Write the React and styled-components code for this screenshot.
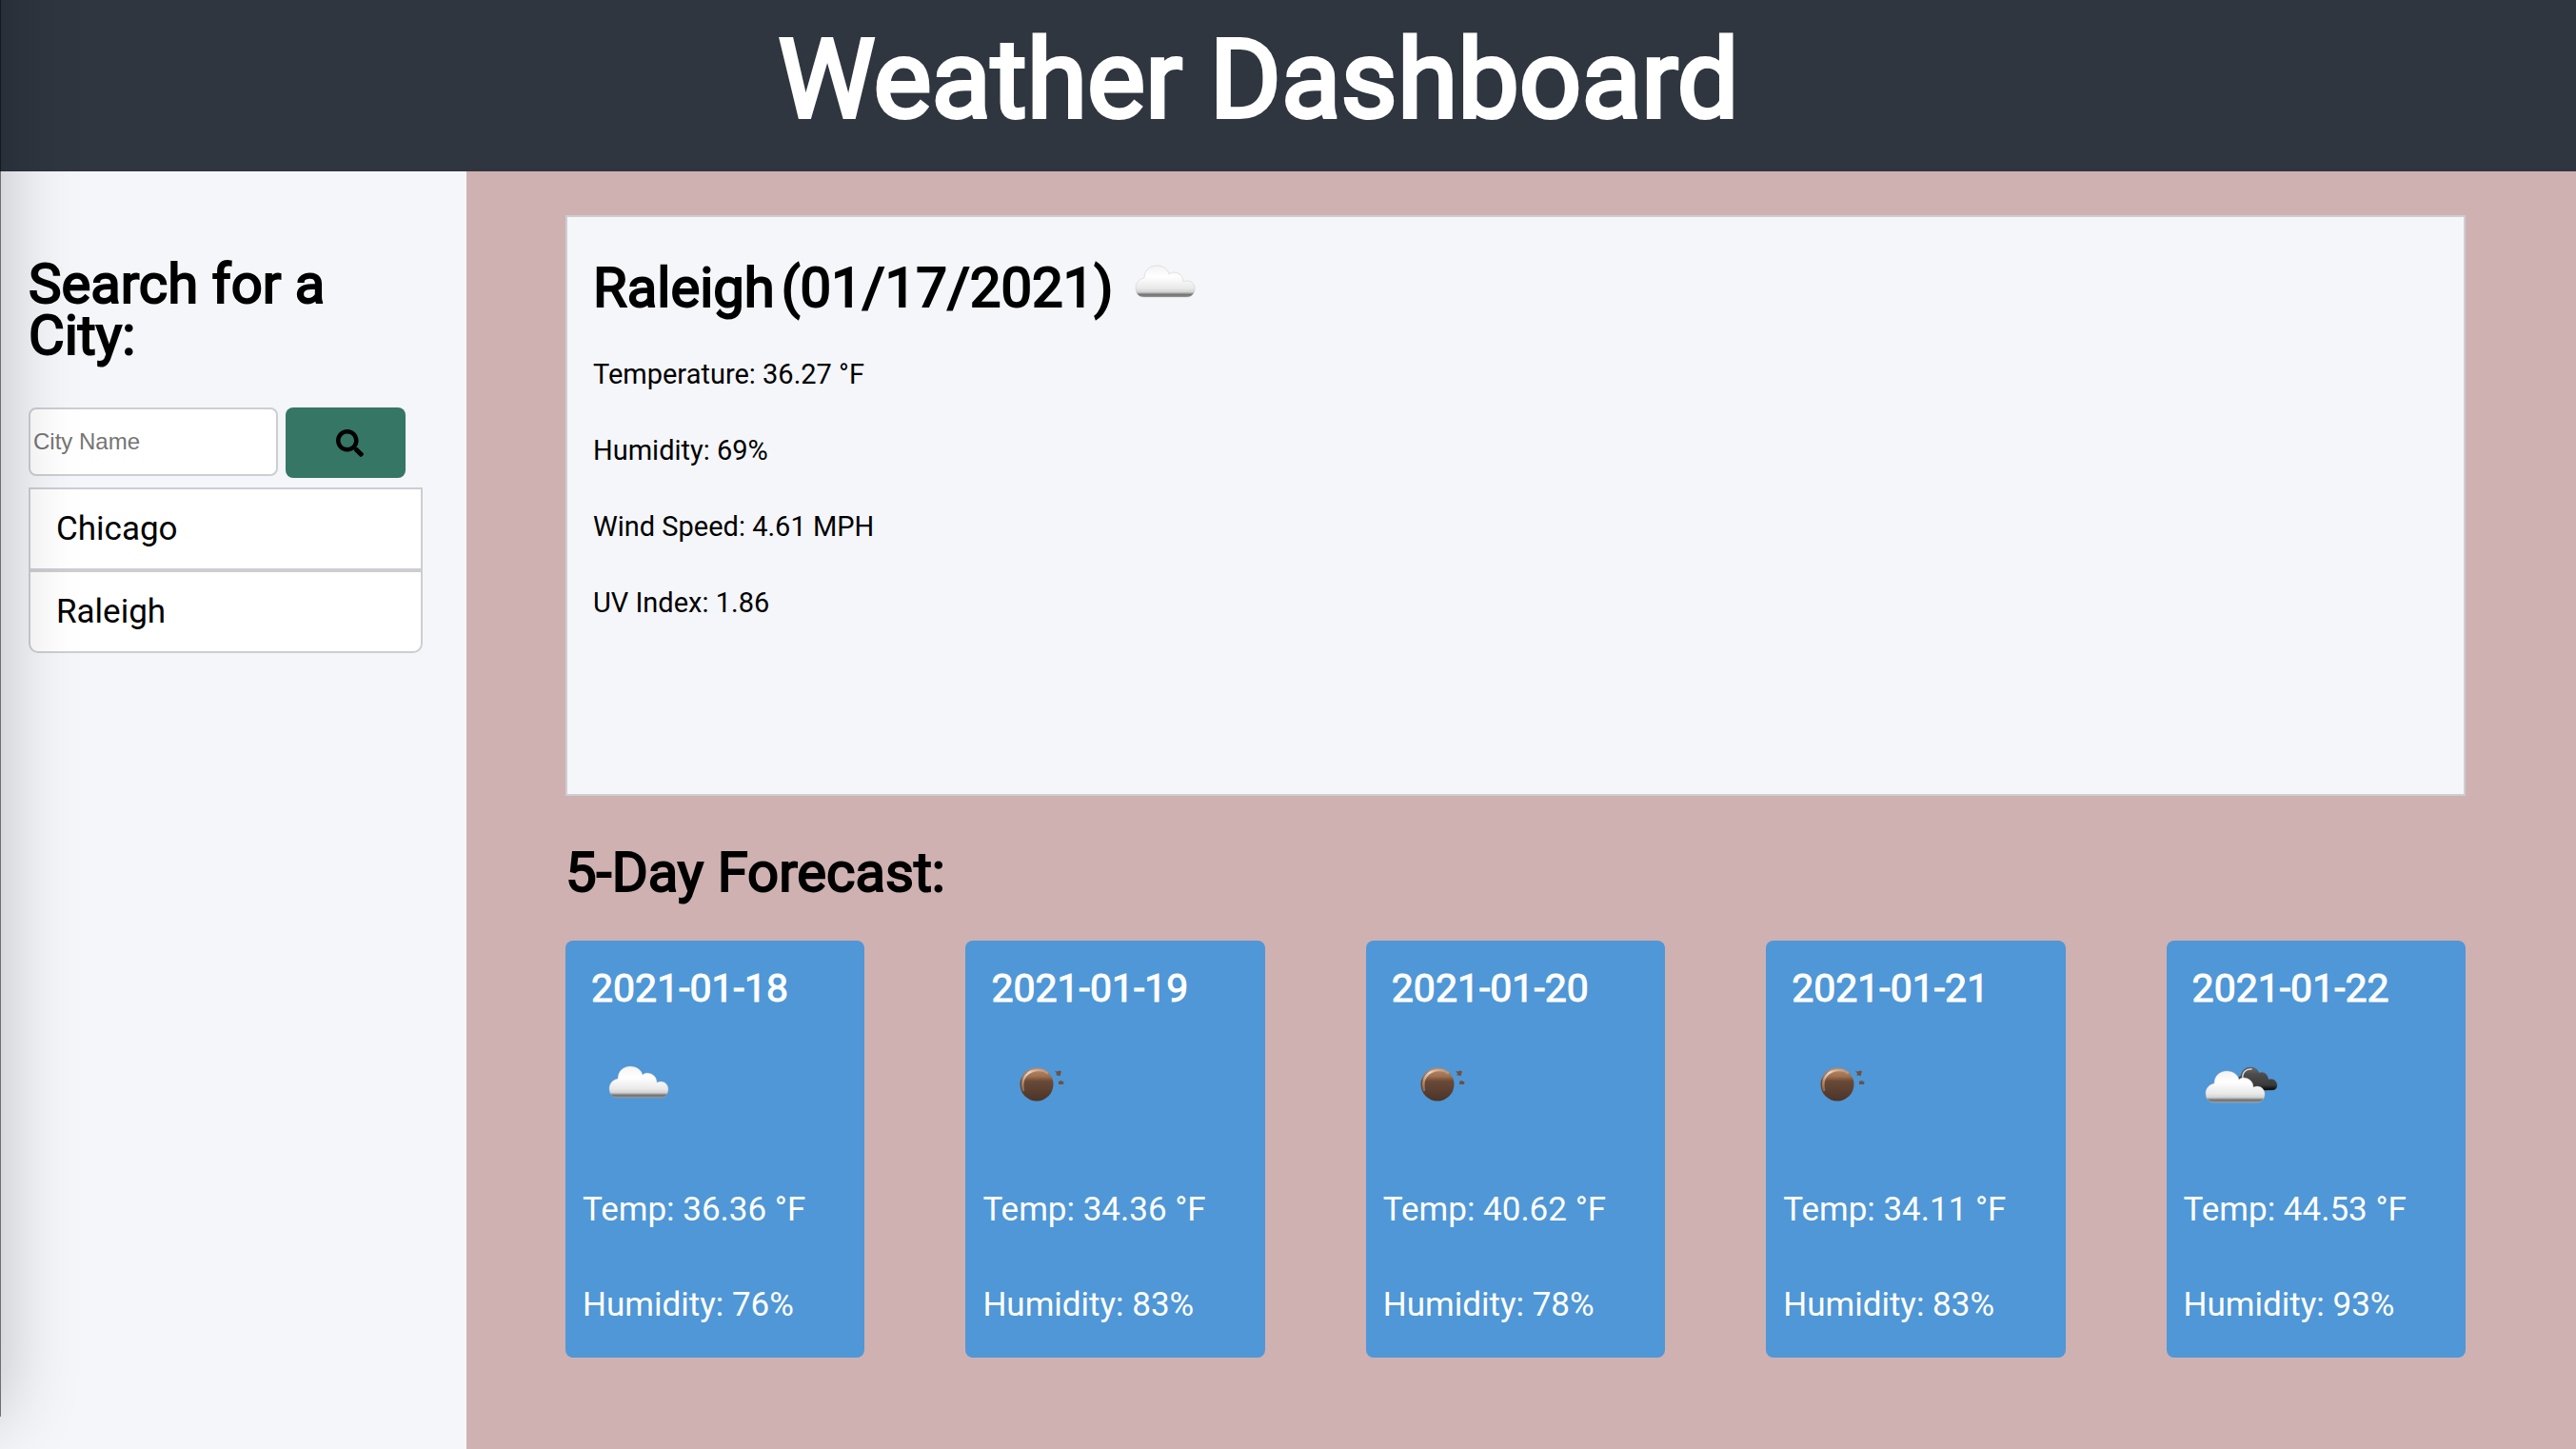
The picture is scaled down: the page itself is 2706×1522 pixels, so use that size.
import React, { useState } from "react";
import styled, { createGlobalStyle } from "styled-components";
import { FaSearch } from "react-icons/fa";

const GlobalStyle = createGlobalStyle`
  *, *::before, *::after { box-sizing: border-box; }
  body {
    margin: 0;
    background: #cfb1b2;
    color: #000;
    font-family: Roboto, "Liberation Sans", sans-serif;
    font-size: 29px;
    line-height: 34px;
  }
`;

const Page = styled.div`
  position: relative;
  display: flex;
  flex-direction: column;
  min-height: 100vh;
  overflow: hidden;
`;

const Header = styled.header`
  padding: 30px 62px 42px 0;
  background: #2f3640;
  color: #fff;
  text-align: center;
`;

const Title = styled.h1`
  margin: 0;
  font-size: 115px;
  font-weight: 400;
  line-height: 108px;
  -webkit-text-stroke: 4px currentColor;
`;

const Heading = styled.h2`
  display: block;
  margin: 0;
  font-size: 58px;
  font-weight: 400;
  line-height: 54px;
  -webkit-text-stroke: 2px currentColor;
`;

const Body = styled.div`
  display: grid;
  grid-template-columns: 490px 1fr;
  flex: 1;
`;

const Sidebar = styled.aside`
  padding: 91px 46px 46px 30px;
  background: #f5f6fa;
`;

const SearchForm = styled.form`
  display: flex;
  align-items: flex-start;
  gap: 8px;
  margin: 49px 0 10px;
`;

const CityInput = styled.input`
  width: 262px;
  height: 72px;
  padding: 0 3px;
  border: 2px solid #cdced2;
  border-radius: 8px;
  background: #fff;
  font-family: "Liberation Sans", Arial, sans-serif;
  font-size: 24px;

  &::placeholder {
    color: #757575;
    opacity: 1;
  }
`;

const SearchButton = styled.button`
  display: flex;
  align-items: center;
  justify-content: center;
  width: 126px;
  height: 74px;
  padding: 0 0 0 8px;
  border: 0;
  border-radius: 8px;
  background: #357665;
  color: #000;
  font-size: 29px;
`;

const CityList = styled.ul`
  margin: 0;
  padding: 0;
  list-style: none;
`;

const CityItem = styled.li`
  border: 2px solid #cdced2;
  background: #fff;
  overflow: hidden;

  &:last-child {
    border-radius: 0 0 10px 10px;
  }
`;

const CityButton = styled.button`
  display: block;
  width: 100%;
  padding: 22px 27px 21px;
  border: 0;
  background: none;
  color: inherit;
  font-family: inherit;
  font-size: 35px;
  line-height: 40px;
  text-align: left;
`;

const Main = styled.main`
  padding: 46px 116px 96px 104px;
`;

const Current = styled.section`
  min-height: 610px;
  padding: 47px 27px;
  border: 2px solid #cdced2;
  background: #f5f6fa;
`;

const CurrentTop = styled.div`
  display: flex;
  align-items: flex-end;
  gap: 7px;
  height: 54px;
  margin-bottom: 47px;
`;

const Readings = styled.div`
  display: flex;
  flex-direction: column;
  gap: 46px;
`;

const Reading = styled.p`
  margin: 0;
`;

const Forecast = styled.section`
  padding-top: 53px;
`;

const Cards = styled.div`
  display: grid;
  grid-template-columns: repeat(5, 1fr);
  gap: 106px;
  margin-top: 45px;
`;

const Card = styled.article`
  padding: 28px 18px 35px;
  border-radius: 8px;
  background: #4f97d6;
  color: #fff;
  font-size: 35px;
  line-height: 40px;
`;

const CardDate = styled.h3`
  margin: 0 9px 28px;
  font-size: 41px;
  font-weight: 400;
  line-height: 44px;
  -webkit-text-stroke: 1px currentColor;
`;

const CardIcon = styled.div`
  height: 100px;
  margin: 0 9px 63px;
`;

const CardLine = styled.p`
  margin: 0;

  & + & {
    margin-top: 60px;
  }
`;

const WeatherSvg = styled.svg`
  display: block;
  flex: none;
  width: 100px;
  height: 100px;
`;

const CurrentIcon = styled.div`
  height: 82px;
  margin-left: -2px;
`;

/* Shadow that a neighbouring window casts over the left edge of the page. */
const EdgeShadow = styled.div`
  position: absolute;
  top: -200px;
  bottom: 34px;
  left: -399px;
  width: 400px;
  border-right: 1px solid rgba(0, 0, 0, 0.55);
  box-shadow: 0 0 76px rgba(0, 0, 0, 0.24);
  pointer-events: none;
`;

const CLOUD =
  "M28 65 C21 65 19 60 19 55 C19 50 23 46 28 45 C28 37 34 32 41 32 C48 32 53 36 54 41 C57 38 62 39 65 41 C68 43 69 46 69 49 C75 46 81 50 81 56 C81 61 78 65 73 65 Z";

function IconDefs({ id }) {
  return (
    <defs>
      <linearGradient id={`${id}-white`} x1="0" y1="0" x2="0" y2="1">
        <stop offset="0" stopColor="#f3f3f3" />
        <stop offset="0.35" stopColor="#ffffff" />
        <stop offset="0.72" stopColor="#e9e9e9" />
        <stop offset="0.84" stopColor="#d2d2d2" />
        <stop offset="0.92" stopColor="#747474" />
        <stop offset="1" stopColor="#8c8c8c" />
      </linearGradient>
      <linearGradient id={`${id}-dark`} x1="0" y1="0" x2="0" y2="1">
        <stop offset="0" stopColor="#6a6a6a" />
        <stop offset="0.3" stopColor="#4c4c4c" />
        <stop offset="0.75" stopColor="#3a3a3a" />
        <stop offset="0.95" stopColor="#080808" />
      </linearGradient>
      <linearGradient id={`${id}-moon`} x1="0" y1="0" x2="0" y2="1">
        <stop offset="0" stopColor="#b08a70" />
        <stop offset="0.25" stopColor="#a3724e" />
        <stop offset="0.4" stopColor="#6a4a38" />
        <stop offset="1" stopColor="#4a3429" />
      </linearGradient>
      <linearGradient id={`${id}-rim`} x1="0" y1="1" x2="0.9" y2="0">
        <stop offset="0" stopColor="#c98e60" stopOpacity="0.5" />
        <stop offset="0.6" stopColor="#ecd8c9" />
        <stop offset="1" stopColor="#e2c4ae" stopOpacity="0.3" />
      </linearGradient>
    </defs>
  );
}

function WeatherIcon({ id, kind, label }) {
  return (
    <WeatherSvg viewBox="0 0 100 100" role="img" aria-label={label}>
      <IconDefs id={id} />
      {kind === "clouds" && (
        <path d={CLOUD} fill={`url(#${id}-white)`} stroke="#b4b4b4" strokeOpacity="0.35" />
      )}
      {kind === "broken" && (
        <>
          <path
            d="M48 58 C45 50 45 45 51 42 C52 36 56 33 61 33 C66 33 69 36 70 39 C75 37 79 40 80 46 C85 44 89 48 89 52 C89 55 87 57 84 57 Z"
            fill={`url(#${id}-dark)`}
            stroke="#4a4a4a"
            strokeOpacity="0.35"
          />
          <path
            d="M53 45 C52 39 56 34.500 62 35"
            fill="none"
            stroke="#d8d8d8"
            strokeWidth="1.500"
            strokeLinecap="round"
          />
          <g transform="translate(-5 5)">
            <path d={CLOUD} fill={`url(#${id}-white)`} stroke="#c8c8c8" strokeOpacity="0.4" />
          </g>
        </>
      )}
      {kind === "moon" && (
        <>
          <circle cx="48" cy="51" r="17.500" fill={`url(#${id}-moon)`} />
          <path
            d="M34 57 C31 45 38 36 50 36 C54 36 57 37 59 39"
            fill="none"
            stroke={`url(#${id}-rim)`}
            strokeWidth="2.500"
            strokeLinecap="round"
          />
          <path d="M67 37 L69.500 37.500 L72 36.500 L74 37.500 L73 40 L73 42 L68.500 41.500 L69 39.500 Z" fill="#6d5245" />
          <path d="M71 48 L73.500 47 L76.500 48.500 L76 51 L71 51 Z" fill="#6d5245" />
        </>
      )}
    </WeatherSvg>
  );
}

const cities = ["Chicago", "Raleigh"];

const readings = [
  "Temperature: 36.27 °F",
  "Humidity: 69%",
  "Wind Speed: 4.61 MPH",
  "UV Index: 1.86",
];

const forecast = [
  { date: "2021-01-18", kind: "clouds", label: "Cloudy", temp: "36.36", humidity: 76 },
  { date: "2021-01-19", kind: "moon", label: "Clear", temp: "34.36", humidity: 83 },
  { date: "2021-01-20", kind: "moon", label: "Clear", temp: "40.62", humidity: 78 },
  { date: "2021-01-21", kind: "moon", label: "Clear", temp: "34.11", humidity: 83 },
  { date: "2021-01-22", kind: "broken", label: "Broken clouds", temp: "44.53", humidity: 93 },
];

export default function App() {
  const [query, setQuery] = useState("");

  return (
    <Page>
      <GlobalStyle />
      <Header>
        <Title>Weather Dashboard</Title>
      </Header>
      <Body>
        <Sidebar>
          <Heading as="label" htmlFor="city">
            Search for a City:
          </Heading>
          <SearchForm onSubmit={(event) => event.preventDefault()}>
            <CityInput
              id="city"
              type="text"
              placeholder="City Name"
              value={query}
              onChange={(event) => setQuery(event.target.value)}
            />
            <SearchButton type="submit" aria-label="Search">
              <FaSearch />
            </SearchButton>
          </SearchForm>
          <CityList>
            {cities.map((city) => (
              <CityItem key={city}>
                <CityButton type="button">{city}</CityButton>
              </CityItem>
            ))}
          </CityList>
        </Sidebar>
        <Main>
          <Current>
            <CurrentTop>
              <Heading>Raleigh</Heading>
              <Heading as="span">(01/17/2021)</Heading>
              <CurrentIcon>
                <WeatherIcon id="now" kind="clouds" label="Cloudy" />
              </CurrentIcon>
            </CurrentTop>
            <Readings>
              {readings.map((text) => (
                <Reading key={text}>{text}</Reading>
              ))}
            </Readings>
          </Current>
          <Forecast>
            <Heading>5-Day Forecast:</Heading>
            <Cards>
              {forecast.map((day) => (
                <Card key={day.date}>
                  <CardDate>{day.date}</CardDate>
                  <CardIcon>
                    <WeatherIcon id={`day-${day.date}`} kind={day.kind} label={day.label} />
                  </CardIcon>
                  <CardLine>{`Temp: ${day.temp} °F`}</CardLine>
                  <CardLine>{`Humidity: ${day.humidity}%`}</CardLine>
                </Card>
              ))}
            </Cards>
          </Forecast>
        </Main>
      </Body>
      <EdgeShadow />
    </Page>
  );
}
